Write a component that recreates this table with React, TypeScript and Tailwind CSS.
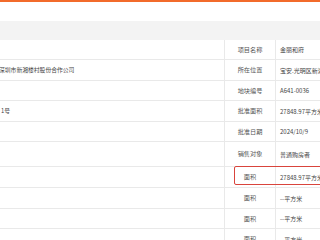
const ROWS = [
  { h: "h-[20px]", left: "", label: "项目名称", value: "金丽和府" },
  { h: "h-[21px]", left: "深圳市新湘楼村股份合作公司", label: "所在位置", value: "宝安.光明区新湖街道" },
  { h: "h-[20px]", left: "", label: "地块编号", value: "A641-0036" },
  { h: "h-[21px]", left: "1号", label: "批准面积", value: "27848.97平方米" },
  { h: "h-[20px]", left: "", label: "批准日期", value: "2024/10/9" },
  { h: "h-[25px]", left: "", label: "销售对象", value: "普通购房者" },
  { h: "h-[21px]", left: "", label: "面积", value: "27848.97平方米" },
  { h: "h-[21px]", left: "", label: "面积", value: "--平方米" },
  { h: "h-[20px]", left: "", label: "面积", value: "--平方米" },
  { h: "h-[21px]", left: "", label: "面积", value: "--平方米" },
];

export default function App() {
  return (
    <div
      className="relative w-[320px] h-[240px] overflow-hidden bg-white text-[6.2px] text-[#444]"
      style={{ fontFamily: '"Noto Sans CJK SC", "Noto Sans", sans-serif' }}
    >
      {/* top accent */}
      <div className="h-[2px] bg-[#f26b2b]" />
      <div className="h-[19px] bg-white" />
      <div className="h-[19px] bg-[#f3f3f3]" />

      {/* table */}
      <div className="flex flex-col">
        {ROWS.map((r, i) => (
          <div key={i} className={`flex ${r.h} border-b border-[#e9e9e9]`}>
            <div className="w-[224px] flex items-center overflow-hidden text-[5.8px]">
              <span className={i === 1 ? "ml-[-1px] whitespace-nowrap" : "ml-[1px] whitespace-nowrap"}>{r.left}</span>
            </div>
            <div className="w-[51px] flex items-center justify-center border-l border-[#e9e9e9] text-[#555]">
              {r.label}
            </div>
            <div className="flex-1 flex items-center pl-[4px] border-l border-[#e9e9e9] whitespace-nowrap overflow-hidden text-[6px]">
              {r.value}
            </div>
          </div>
        ))}
      </div>

      {/* highlight annotation */}
      <div className="absolute left-[234px] top-[166px] w-[100px] h-[19px] border-[1.5px] border-[#d9443c] rounded-[2px]" />
    </div>
  );
}
